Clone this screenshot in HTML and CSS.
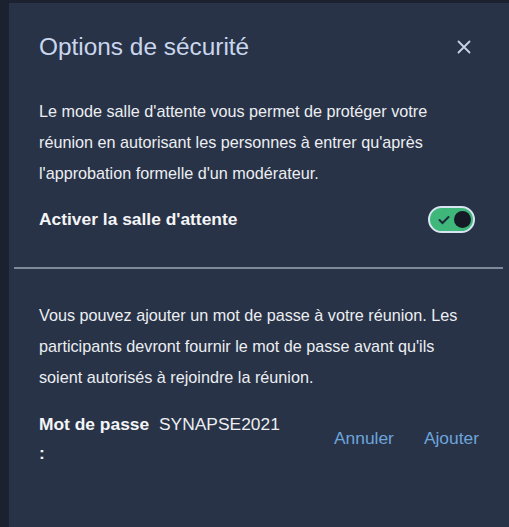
FILE: index.html
```html
<!DOCTYPE html>
<html lang="fr">
<head>
    <meta charset="UTF-8">
    <meta name="viewport" content="width=device-width, initial-scale=1.0">
    <title>Options de sécurité</title>
    <link rel="stylesheet" href="styles.css">
</head>
<body>

    <div class="dialog">
        <div class="dialog-header">
            <h2>Options de sécurité</h2>
            <button class="close-btn" aria-label="Fermer">
                <svg width="16" height="16" viewBox="0 0 16 16">
                    <path d="M2.5 2.5 L13.5 13.5 M13.5 2.5 L2.5 13.5" stroke="#c9d3e4" stroke-width="1.8" stroke-linecap="round"/>
                </svg>
            </button>
        </div>

        <div class="section">
            <p class="info">Le mode salle d'attente vous permet de protéger votre réunion en autorisant les personnes à entrer qu'après l'approbation formelle d'un modérateur.</p>
            <div class="toggle-row">
                <span class="label">Activer la salle d'attente</span>
                <div class="toggle">
                    <svg class="check" width="12" height="10" viewBox="0 0 12 10">
                        <path d="M1.5 5 L4.5 8 L10.5 2" stroke="#1d2a3a" stroke-width="2" fill="none" stroke-linecap="round"/>
                    </svg>
                    <span class="knob"></span>
                </div>
            </div>
        </div>

        <hr class="divider">

        <div class="section">
            <p class="info">Vous pouvez ajouter un mot de passe à votre réunion. Les participants devront fournir le mot de passe avant qu'ils soient autorisés à rejoindre la réunion.</p>
            <div class="password-row">
                <span class="label pw-label">Mot de passe :</span>
                <span class="pw-value">SYNAPSE2021</span>
                <div class="actions">
                    <button class="link-btn">Annuler</button>
                    <button class="link-btn">Ajouter</button>
                </div>
            </div>
        </div>
    </div>

</body>
</html>
```

FILE: styles.css
```css
body {
    margin: 0;
    background-color: #1c2130;
    font-family: "Liberation Sans", Arial, sans-serif;
    height: 527px;
    overflow: hidden;
}
.dialog {
    margin: 3px 0 0 9px;
    background: #283347;
    height: 540px;
    width: 520px;
    box-sizing: border-box;
}
.dialog-header {
    display: flex;
    justify-content: space-between;
    align-items: center;
    padding: 30px 27px 0 30px;
    width: 490px;
    box-sizing: border-box;
}
.dialog-header h2 {
    margin: 0;
    font-size: 24.4px;
    font-weight: normal;
    color: #c9d6ee;
}
.close-btn {
    background: none;
    border: none;
    padding: 0;
    cursor: pointer;
    display: flex;
}
.section {
    padding: 0 30px;
    width: 500px;
    box-sizing: border-box;
}
.info {
    margin: 0;
    max-width: 430px;
    font-size: 16.2px;
    line-height: 31px;
    color: #eceef2;
}
.dialog-header + .section .info {
    margin-top: 35px;
}
.toggle-row {
    display: flex;
    justify-content: space-between;
    align-items: center;
    margin-top: 17px;
    padding-right: 4px;
}
.label {
    font-size: 17.4px;
    font-weight: bold;
    color: #f4f5f7;
}
.toggle {
    height: 23px;
    border: 2px solid #d7e4f2;
    border-radius: 14px;
    background: #3fb67a;
    display: flex;
    align-items: center;
    justify-content: space-between;
    padding: 0 2px 0 8px;
    width: 33px;
}
.knob {
    width: 17px;
    height: 17px;
    border-radius: 50%;
    background: #151a26;
}
.divider {
    border: none;
    height: 2px;
    background: #7f8999;
    margin: 34px 0 0 5px;
    width: 489px;
}
.section + .divider + .section .info {
    margin-top: 31px;
}
.password-row {
    display: flex;
    align-items: flex-start;
    margin-top: 17px;
}
.pw-label {
    width: 116px;
    line-height: 29px;
}
.pw-value {
    font-size: 17.4px;
    color: #eceef2;
    line-height: 29px;
    margin-left: 4px;
}
.actions {
    display: flex;
    gap: 30px;
    margin-left: auto;
    margin-top: 18px;
}
.link-btn {
    background: none;
    border: none;
    padding: 0;
    font-family: inherit;
    font-size: 17.4px;
    color: #6ea4dc;
    cursor: pointer;
}
```
